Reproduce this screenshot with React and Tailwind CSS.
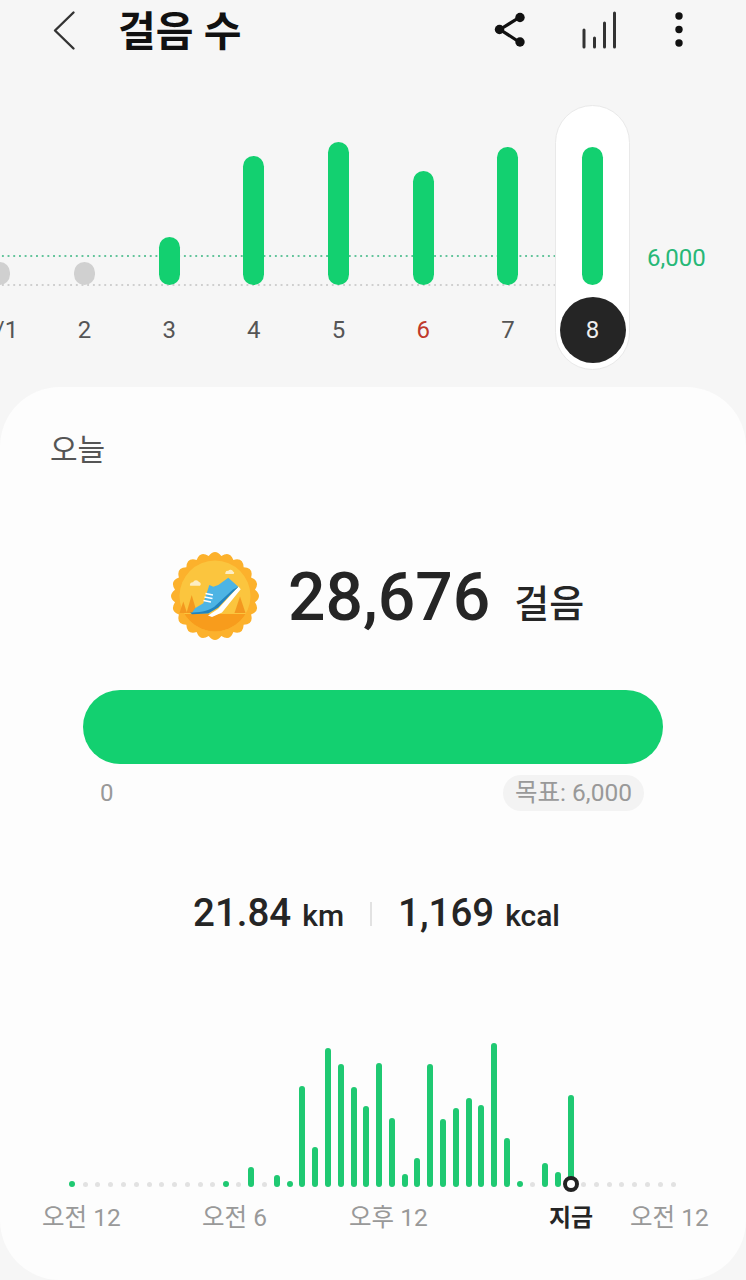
const days = [
  { label: "8/1", dot: true },
  { label: "2", dot: true },
  { label: "3", h: 48 },
  { label: "4", h: 129 },
  { label: "5", h: 143 },
  { label: "6", h: 114, red: true },
  { label: "7", h: 138 },
  { label: "8", h: 138, active: true },
];

// Bar heights for the 48 half-hour slots of the day; 0 = no steps (grey dot).
const slots = [
  6, 0, 0, 0, 0, 0, 0, 0, 0, 0, 0, 0, 6, 0, 20, 0, 12, 6, 101, 40, 139, 123, 100, 81,
  124, 69, 13, 29, 123, 68, 79, 89, 82, 144, 49, 6, 0, 24, 15, 92, 0, 0, 0, 0, 0, 0, 0, 0,
];

const scallopPath = () => {
  const n = 20;
  const pts = [];
  for (let i = 0; i < n * 2; i++) {
    const a = (i / (n * 2)) * Math.PI * 2;
    const r = i % 2 === 0 ? 48 : 40.5;
    pts.push([65 + r * Math.cos(a), 61 + r * Math.sin(a)]);
  }
  let d = `M${pts[1][0].toFixed(2)} ${pts[1][1].toFixed(2)}`;
  for (let i = 0; i < n; i++) {
    const c = pts[(2 * i + 2) % (n * 2)];
    const e = pts[(2 * i + 3) % (n * 2)];
    d += `Q${c[0].toFixed(2)} ${c[1].toFixed(2)} ${e[0].toFixed(2)} ${e[1].toFixed(2)}`;
  }
  return d + "Z";
};

function Badge() {
  return (
    <svg viewBox="20 16 90 90" className="w-[90px] h-[90px] shrink-0">
      <defs>
        <clipPath id="badge-inner">
          <circle cx="65" cy="61" r="35.5" />
        </clipPath>
      </defs>
      <path d={scallopPath()} fill="#fcb12c" />
      <circle cx="65" cy="61" r="35.5" fill="#fbc53e" />
      <g clipPath="url(#badge-inner)">
        <rect x="25" y="79" width="80" height="30" fill="#f89c1c" />
      </g>
      <path d="M41.7 60 47 78H36.5z" fill="#f3981f" />
      <path d="M33.3 66.5 37 78h-7.5z" fill="#f3981f" />
      <path d="M90 61.5 95.5 78h-11z" fill="#f3981f" />
      <path d="M40 49.5a2.4 2.4 0 0 1 3-2.2a3.4 3.4 0 0 1 6-.3a2.2 2.2 0 0 1 1 3.8H40.5a.9.9 0 0 1-.5-1.3z" fill="#fdeec4" />
      <path d="M75.5 37.5a2 2 0 0 1 2.6-1.5a2.8 2.8 0 0 1 5 .4a1.7 1.7 0 0 1 .6 2.6h-8a.9.9 0 0 1-.2-1.5z" fill="#fdeec4" />
      <path d="M58 80.5 68 74l20.5-22.5 2.2 2.8L72 77.5l-10 4.5z" fill="#ffffff" />
      <path d="M45 73.3 53.3 68.3 56.7 58.3 59.3 50 63.3 51.7 68.3 50 78.3 42.7 88.3 51.7 80 60 68.3 71.7 58.3 77.3 41.7 78.3z" fill="#4db4e4" />
      <path d="M40 77.5c9 0 17-1 24-5.5L83 54.5l5.3-2.8L80 60 68.3 72.5 58.3 78.5 42 79.3z" fill="#2283bd" />
      <path d="M55.5 58.5l7.5 1.5M54.5 62l8 1.5M53.5 65.5l7.5 1.5" stroke="#ffffff" strokeWidth="1.3" fill="none" />
    </svg>
  );
}

export default function App() {
  return (
    <div className="w-[746px] h-[1280px] overflow-hidden bg-[#f6f6f6] font-['Roboto','Noto_Sans_CJK_KR',sans-serif]">
      {/* Header */}
      <header className="h-[60px] flex items-center relative">
        <svg className="absolute left-0 top-0 pointer-events-none" width="746" height="60" viewBox="0 0 746 60" fill="none">
          <path d="M73.5 12.5 55 30.5l18.5 18" stroke="#333" strokeWidth="2.4" strokeLinecap="round" strokeLinejoin="round" />
          <path d="M520 17 500 29.5l20 13" stroke="#111" strokeWidth="3.2" />
          <circle cx="520" cy="17.5" r="4.7" fill="#111" />
          <circle cx="499.5" cy="29.5" r="4.7" fill="#111" />
          <circle cx="520" cy="42" r="4.7" fill="#111" />
          <path d="M584 30v17M594.5 38v9M604.5 23v24M614.5 13v34" stroke="#333" strokeWidth="3" strokeLinecap="round" />
          <circle cx="679" cy="16" r="3.7" fill="#111" />
          <circle cx="679" cy="29.5" r="3.7" fill="#111" />
          <circle cx="679" cy="43" r="3.7" fill="#111" />
        </svg>
        <h1 className="ml-[118px] mt-[3px] text-[41px] leading-[60px] font-bold text-[#111]">걸음 수</h1>
      </header>

      {/* Weekly chart */}
      <section className="relative h-[327px]">
        <div className="absolute left-0 top-[195px] w-[555px] h-[2px] bg-[radial-gradient(circle,#63c49b_1px,transparent_1.2px)] bg-[length:5.7px_2px]" />
        <div className="absolute left-0 top-[224px] w-[555px] h-[2px] bg-[radial-gradient(circle,#cfcfcf_1px,transparent_1.2px)] bg-[length:5.7px_2px]" />
        <div className="absolute left-[555px] top-[45px] w-[75px] h-[265px] rounded-full bg-white border border-[#e9e9e9]" />
        <span className="absolute left-[647px] top-[183px] text-[24px] leading-[30px] text-[#27b877]">6,000</span>

        <div className="relative flex ml-[-42.6px]">
          {days.map((d) => (
            <div key={d.label} className="w-[84.7px] shrink-0 flex flex-col items-center">
              <div className="h-[225px] flex items-end">
                {d.dot ? (
                  <div className="w-[21px] h-[23px] rounded-full bg-[#d0d0d0]" />
                ) : (
                  <div className="w-[21px] rounded-full bg-[#13d070]" style={{ height: d.h }} />
                )}
              </div>
              <div
                className={
                  d.active
                    ? "mt-[12px] w-[66px] h-[66px] rounded-full bg-[#252525] flex items-center justify-center text-[24px] text-[#eeeeee]"
                    : d.red
                    ? "mt-[12px] h-[66px] flex items-center justify-center text-[24px] text-[#c0392b]"
                    : "mt-[12px] h-[66px] flex items-center justify-center text-[24px] text-[#555555]"
                }
              >
                {d.label}
              </div>
            </div>
          ))}
        </div>
      </section>

      {/* Today card */}
      <main className="h-[893px] rounded-[60px] bg-[#fdfdfd] flex flex-col">
        <div className="mt-[44px] pl-[50px] text-[30px] leading-[38px] text-[#555555]">오늘</div>

        <div className="mt-[81px] h-[92px] pl-[170px] flex items-center">
          <Badge />
          <span className="ml-[28px] mt-[3px] text-[66px] leading-[92px] font-medium text-[#252525]">28,676</span>
          <span className="ml-[24px] mt-[16px] text-[38px] leading-[40px] font-medium text-[#252525]">걸음</span>
        </div>

        <div className="mt-[48px] mx-[83px] h-[74px] rounded-full bg-[#13d070]" />

        <div className="mt-[11px] h-[36px] pl-[100px] pr-[102px] flex items-center justify-between text-[24px] text-[#999999]">
          <span>0</span>
          <span className="h-[36px] px-[12px] rounded-full bg-[#f3f3f3] flex items-center text-[24.5px]">목표: 6,000</span>
        </div>

        <div className="mt-[83px] h-[40px] pl-[193px] flex items-center text-[#252525] font-medium">
          <div className="flex items-baseline">
            <span className="text-[38.5px] leading-[40px]">21.84</span>
            <span className="ml-[11px] text-[30px] leading-[40px]">km</span>
          </div>
          <div className="ml-[26px] mr-[26px] w-[2px] h-[24px] bg-[#e2e2e2]" />
          <div className="flex items-baseline">
            <span className="text-[38.5px] leading-[40px]">1,169</span>
            <span className="ml-[11px] text-[30px] leading-[40px]">kcal</span>
          </div>
        </div>

        <div className="relative h-[253px] pl-[66px] flex items-end">
          {slots.map((h, i) => (
            <div key={i} className="w-[12.79px] shrink-0 flex justify-center">
              {h > 0 ? (
                <div className="w-[6px] rounded-full bg-[#1fc972]" style={{ height: h }} />
              ) : (
                <div className="w-[5px] h-[5px] rounded-full bg-[#e2e2e2]" />
              )}
            </div>
          ))}
          <div className="absolute left-[562.5px] top-[242px] w-[16px] h-[16px] rounded-full border-[4px] border-[#222222] bg-white" />
        </div>

        <div className="mt-[14px] h-[34px] pl-[42px] flex items-center text-[24.5px] leading-[34px] text-[#999999] whitespace-nowrap">
          <span className="w-[78px] text-center">오전 12</span>
          <span className="ml-[82px] w-[64px] text-center">오전 6</span>
          <span className="ml-[83px] w-[78px] text-center">오후 12</span>
          <span className="ml-[122px] w-[43px] text-center font-bold text-[24px] text-[#252525]">지금</span>
          <span className="ml-[38px] w-[78px] text-center">오전 12</span>
        </div>
      </main>
    </div>
  );
}
